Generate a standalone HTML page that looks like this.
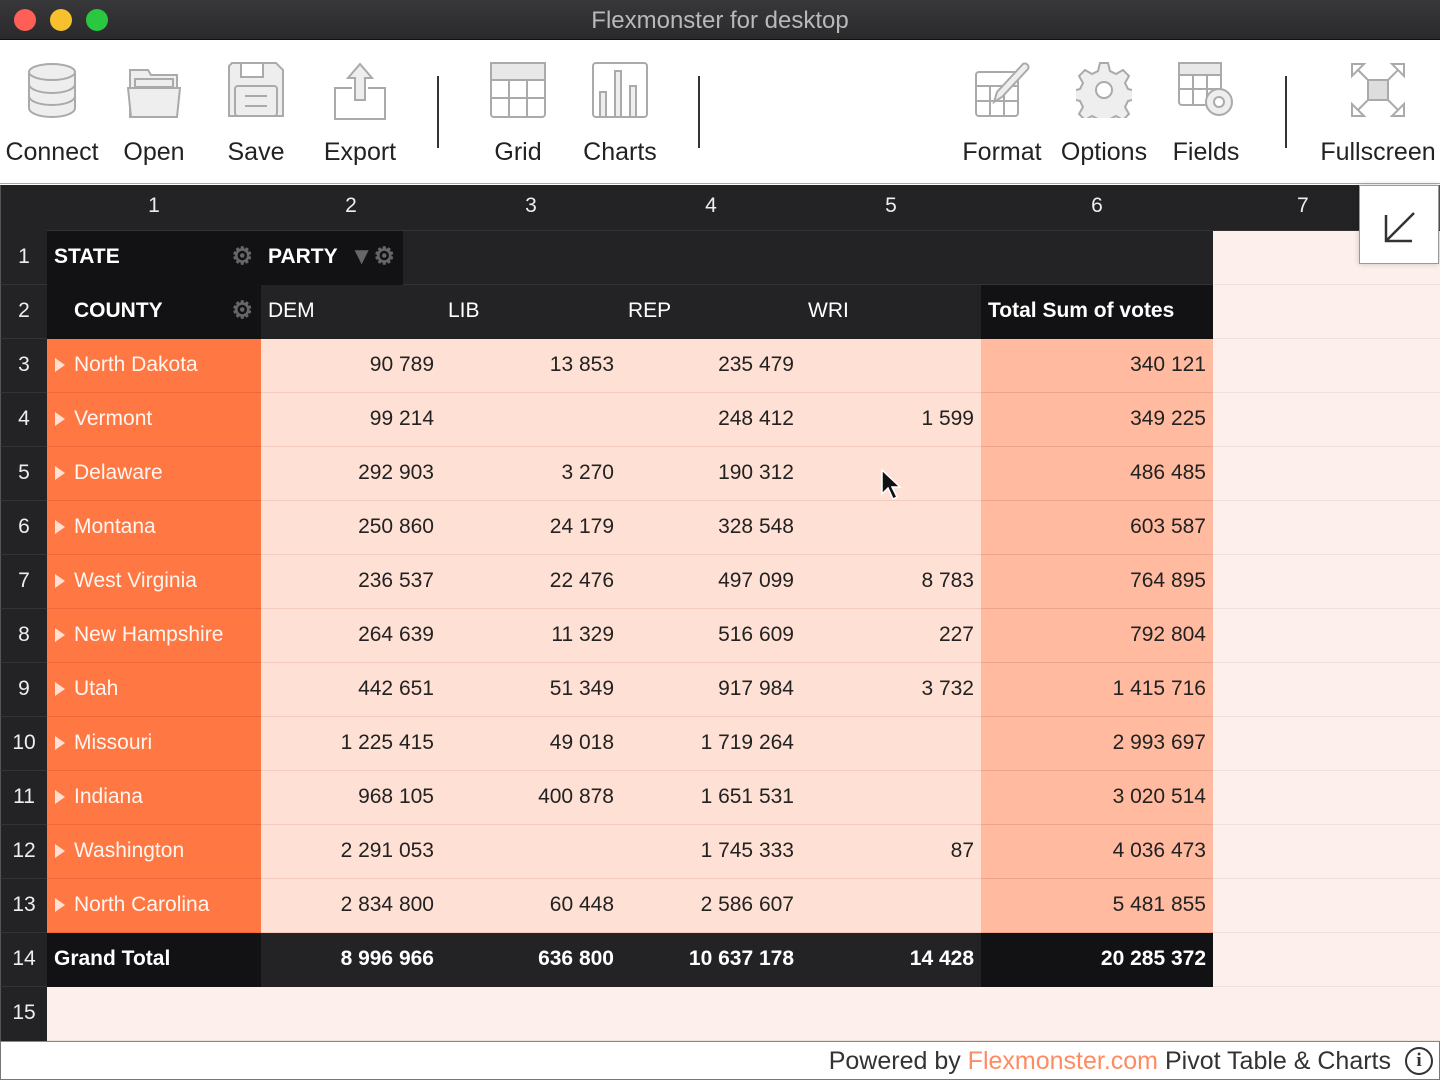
<!DOCTYPE html>
<html><head><meta charset="utf-8"><style>
*{box-sizing:border-box;margin:0;padding:0}
body{width:1440px;height:1080px;overflow:hidden;background:#fff;font-family:"Liberation Sans",Arial,sans-serif;position:relative}
.title{position:absolute;left:0;top:0;width:1440px;height:40px;background:linear-gradient(#38383a,#2a2a2c);border-bottom:1px solid #111;color:#b8b8b8;font-size:24px;text-align:center;line-height:41px}
.dot{position:absolute;top:9px;width:22px;height:22px;border-radius:50%}
.tb{position:absolute;top:40px;left:0;width:1440px;height:144px;background:#fff;border-bottom:1px solid #aaa}
.btn{position:absolute;top:0;height:144px;text-align:center;font-size:25px;color:#222}
.btn svg{position:absolute;top:22px;left:50%;transform:translateX(-50%)}
.btn span{position:absolute;top:98px;left:0;right:0;white-space:nowrap}
.sep{position:absolute;top:36px;width:2px;height:72px;background:#333}
.grid{position:absolute;left:0;top:185px;width:1440px;height:856px;background:#232325;border-right:1px solid #555}
.r{position:absolute;left:0;width:1440px;height:54px;display:flex;font-size:21px}
.r>div{height:54px;line-height:52px;white-space:nowrap;overflow:hidden}
.rh{width:47px;text-align:center;color:#eee;background:#232325;border-bottom:1px solid #333;border-left:1px solid #555}
.c1{width:214px}.c{width:180px}.c6{width:232px}.c7{flex:1}
.n{text-align:right;padding-right:7px;color:#222}
.o{background:#ff7843;color:#fff6f0;padding-left:8px;border-bottom:1px solid #f0683a}
.o:before{content:"";display:inline-block;border-left:10px solid #ffe0d2;border-top:7px solid transparent;border-bottom:7px solid transparent;margin-right:9px;vertical-align:-1px}
.p{background:#ffe0d4;border-bottom:1px solid #f3cbbd}
.t{background:#ffbaa0;border-bottom:1px solid #eea48a}
.e{background:#fdf0ec;border-bottom:1px solid #f0e0dc}
.d{background:#232325;color:#fff}
.k{background:#121214;color:#fff}
.b{font-weight:bold}
.g{position:absolute;right:8px;color:#666;font-size:24px}
.foot{position:absolute;left:0;top:1041px;width:1440px;height:39px;background:#fff;border:1px solid #777;border-top:1px solid #888;font-size:25px;color:#333;text-align:right;padding-right:48px;line-height:38px}
</style></head><body>
<div class="title">Flexmonster for desktop
<div class="dot" style="left:14px;background:#fe5f57"></div><div class="dot" style="left:50px;background:#f6c02f"></div><div class="dot" style="left:86px;background:#29c840"></div></div>
<div class="tb">
<div class="btn" style="left:0;width:104px"><svg width="50" height="56" viewBox="0 0 50 56" fill="#eee" stroke="#aaa" stroke-width="2"><path d="M2 10v36c0 5 10 9 23 9s23-4 23-9V10"/><ellipse cx="25" cy="10" rx="23" ry="8"/><path d="M2 22c0 5 10 9 23 9s23-4 23-9M2 34c0 5 10 9 23 9s23-4 23-9" fill="none"/></svg><span>Connect</span></div>
<div class="btn" style="left:104px;width:100px"><svg width="54" height="56" viewBox="0 0 54 56" fill="#eee" stroke="#aaa" stroke-width="2"><path d="M3 8h18l3 5h26v42H3z"/><path d="M8 17h38v8H8z"/><path d="M1 26h52l-3 29H4z"/></svg><span>Open</span></div>
<div class="btn" style="left:204px;width:104px"><svg width="56" height="56" viewBox="0 0 56 56" fill="#eee" stroke="#aaa" stroke-width="2"><path d="M4 1h44l7 7v46H1V4z"/><path d="M13 1h22v14H13z" fill="#fff"/><rect x="7" y="24" width="42" height="30" rx="3"/><path d="M17 34h22M17 44h22" fill="none"/></svg><span>Save</span></div>
<div class="btn" style="left:308px;width:104px"><svg width="56" height="58" viewBox="0 0 56 58" fill="#eee" stroke="#aaa" stroke-width="2"><path d="M20 26H3v31h50V26H36" fill="none"/><path d="M28 2L16 16h7v22h10V16h7z"/></svg><span>Export</span></div>
<div class="sep" style="left:437px"></div>
<div class="btn" style="left:468px;width:100px"><svg width="56" height="56" viewBox="0 0 56 56" stroke="#aaa" stroke-width="2" fill="#fff"><rect x="1" y="1" width="54" height="54" rx="3"/><rect x="1" y="1" width="54" height="17" fill="#e8e8e8"/><path d="M1 36h54M19 18v37M37 18v37" fill="none"/></svg><span>Grid</span></div>
<div class="btn" style="left:568px;width:104px"><svg width="56" height="56" viewBox="0 0 56 56" stroke="#aaa" stroke-width="2" fill="#fff"><rect x="1" y="1" width="54" height="54" rx="3"/><path d="M8 30h6v25H8zM23 9h6v46h-6zM38 24h6v31h-6z" fill="#eee"/></svg><span>Charts</span></div>
<div class="sep" style="left:698px"></div>
<div class="btn" style="left:954px;width:96px"><svg width="56" height="56" viewBox="0 0 56 56" stroke="#aaa" stroke-width="2" fill="#fff"><rect x="2" y="10" width="42" height="44" rx="3"/><path d="M2 24h42M2 39h42M16 24v30M30 24v30" fill="none"/><path d="M20 40l3-10 26-28c3-2 7 2 5 5L28 35z" fill="#eee"/></svg><span>Format</span></div>
<div class="btn" style="left:1054px;width:100px"><svg width="56" height="56" viewBox="0 0 56 56" stroke="#aaa" stroke-width="2" fill="#eee"><path d="M24 1h8l2 8 6 3 7-4 6 6-4 7 3 6 8 2v8l-8 2-3 6 4 7-6 6-7-4-6 3-2 8h-8l-2-8-6-3-7 4-6-6 4-7-3-6-8-2v-8l8-2 3-6-4-7 6-6 7 4 6-3z"/><circle cx="28" cy="28" r="8" fill="#fff"/></svg><span>Options</span></div>
<div class="btn" style="left:1158px;width:96px"><svg width="58" height="56" viewBox="0 0 58 56" stroke="#aaa" stroke-width="2" fill="#fff"><rect x="2" y="1" width="42" height="42" rx="3"/><rect x="2" y="1" width="42" height="12" fill="#e8e8e8"/><path d="M2 27h42M16 13v30M30 13v30" fill="none"/><circle cx="42" cy="40" r="13" fill="#eee"/><circle cx="42" cy="40" r="5"/></svg><span>Fields</span></div>
<div class="sep" style="left:1285px"></div>
<div class="btn" style="left:1316px;width:124px"><svg width="56" height="56" viewBox="0 0 56 56" stroke="#aaa" stroke-width="2" fill="#fff"><rect x="18" y="18" width="20" height="20" fill="#ddd"/><path d="M2 2l16 16M54 2L38 18M2 54l16-16M54 54L38 38" fill="none"/><path d="M2 2h12L2 14zM54 2H42l12 12zM2 54h12L2 42zM54 54H42l12-12z"/></svg><span>Fullscreen</span></div>
</div>

<div class="grid">
<div class="r" style="top:0;height:46px;color:#eee;border-bottom:1px solid #333"><div class="rh" style="height:46px;line-height:42px;border-bottom:none"></div><div class="c1" style="height:46px;line-height:42px;text-align:center">1</div><div class="c" style="height:46px;line-height:42px;text-align:center">2</div><div class="c" style="height:46px;line-height:42px;text-align:center">3</div><div class="c" style="height:46px;line-height:42px;text-align:center">4</div><div class="c" style="height:46px;line-height:42px;text-align:center">5</div><div class="c6" style="height:46px;line-height:42px;text-align:center">6</div><div class="c7" style="height:46px;line-height:42px;padding-left:84px">7</div></div>

<div class="r" style="top:46px"><div class="rh">1</div><div class="c1 k b" style="padding-left:7px;position:relative">STATE<span class="g">⚙</span></div><div style="width:142px;padding-left:7px;position:relative" class="k b">PARTY<span class="g">▼⚙</span></div><div class="d" style="width:810px;border-bottom:1px solid #333"></div><div class="c7 e"></div></div>

<div class="r" style="top:100px"><div class="rh">2</div><div class="c1 k b" style="padding-left:27px;position:relative">COUNTY<span class="g">⚙</span></div><div class="c d" style="padding-left:7px">DEM</div><div class="c d" style="padding-left:7px">LIB</div><div class="c d" style="padding-left:7px">REP</div><div class="c d" style="padding-left:7px">WRI</div><div class="c6 k b" style="padding-left:7px">Total Sum of votes</div><div class="c7 e"></div></div>

<div class="r" style="top:154px"><div class="rh">3</div><div class="c1 o">North Dakota</div><div class="c p n">90 789</div><div class="c p n">13 853</div><div class="c p n">235 479</div><div class="c p n"></div><div class="c6 t n">340 121</div><div class="c7 e"></div></div>
<div class="r" style="top:208px"><div class="rh">4</div><div class="c1 o">Vermont</div><div class="c p n">99 214</div><div class="c p n"></div><div class="c p n">248 412</div><div class="c p n">1 599</div><div class="c6 t n">349 225</div><div class="c7 e"></div></div>
<div class="r" style="top:262px"><div class="rh">5</div><div class="c1 o">Delaware</div><div class="c p n">292 903</div><div class="c p n">3 270</div><div class="c p n">190 312</div><div class="c p n"></div><div class="c6 t n">486 485</div><div class="c7 e"></div></div>
<div class="r" style="top:316px"><div class="rh">6</div><div class="c1 o">Montana</div><div class="c p n">250 860</div><div class="c p n">24 179</div><div class="c p n">328 548</div><div class="c p n"></div><div class="c6 t n">603 587</div><div class="c7 e"></div></div>
<div class="r" style="top:370px"><div class="rh">7</div><div class="c1 o">West Virginia</div><div class="c p n">236 537</div><div class="c p n">22 476</div><div class="c p n">497 099</div><div class="c p n">8 783</div><div class="c6 t n">764 895</div><div class="c7 e"></div></div>
<div class="r" style="top:424px"><div class="rh">8</div><div class="c1 o">New Hampshire</div><div class="c p n">264 639</div><div class="c p n">11 329</div><div class="c p n">516 609</div><div class="c p n">227</div><div class="c6 t n">792 804</div><div class="c7 e"></div></div>
<div class="r" style="top:478px"><div class="rh">9</div><div class="c1 o">Utah</div><div class="c p n">442 651</div><div class="c p n">51 349</div><div class="c p n">917 984</div><div class="c p n">3 732</div><div class="c6 t n">1 415 716</div><div class="c7 e"></div></div>
<div class="r" style="top:532px"><div class="rh">10</div><div class="c1 o">Missouri</div><div class="c p n">1 225 415</div><div class="c p n">49 018</div><div class="c p n">1 719 264</div><div class="c p n"></div><div class="c6 t n">2 993 697</div><div class="c7 e"></div></div>
<div class="r" style="top:586px"><div class="rh">11</div><div class="c1 o">Indiana</div><div class="c p n">968 105</div><div class="c p n">400 878</div><div class="c p n">1 651 531</div><div class="c p n"></div><div class="c6 t n">3 020 514</div><div class="c7 e"></div></div>
<div class="r" style="top:640px"><div class="rh">12</div><div class="c1 o">Washington</div><div class="c p n">2 291 053</div><div class="c p n"></div><div class="c p n">1 745 333</div><div class="c p n">87</div><div class="c6 t n">4 036 473</div><div class="c7 e"></div></div>
<div class="r" style="top:694px"><div class="rh">13</div><div class="c1 o">North Carolina</div><div class="c p n">2 834 800</div><div class="c p n">60 448</div><div class="c p n">2 586 607</div><div class="c p n"></div><div class="c6 t n">5 481 855</div><div class="c7 e"></div></div>
<div class="r b" style="top:748px"><div class="rh" style="font-weight:normal">14</div><div class="c1 k" style="padding-left:7px">Grand Total</div><div class="c d n" style="color:#fff">8 996 966</div><div class="c d n" style="color:#fff">636 800</div><div class="c d n" style="color:#fff">10 637 178</div><div class="c d n" style="color:#fff">14 428</div><div class="c6 k n" style="color:#fff">20 285 372</div><div class="c7 e"></div></div>
<div class="r" style="top:802px"><div class="rh" style="border-bottom:none">15</div><div class="e" style="flex:1"></div></div>

<svg style="position:absolute;left:880px;top:283px" width="22" height="34" viewBox="0 0 22 34"><path d="M2 2v24l6-6 5 11 4-2-5-10h8z" fill="#111" stroke="#fff" stroke-width="1.5"/></svg>
<div style="position:absolute;left:1359px;top:0;width:80px;height:79px;background:#fff;border:1px solid #999;box-shadow:0 0 6px rgba(0,0,0,.2)"><svg width="80" height="79" viewBox="0 0 80 79"><path d="M26 29v26h26M26 55L54 27" fill="none" stroke="#333" stroke-width="2.5"/></svg></div>
</div>

<div class="foot">Powered by <span style="color:#ff8b63">Flexmonster.com</span> Pivot Table &amp; Charts<span style="position:absolute;right:6px;top:5px;width:28px;height:28px;border:2px solid #333;border-radius:50%;font-size:19px;line-height:24px;text-align:center;font-weight:bold;font-family:'Liberation Serif',serif">i</span></div>
</body></html>
